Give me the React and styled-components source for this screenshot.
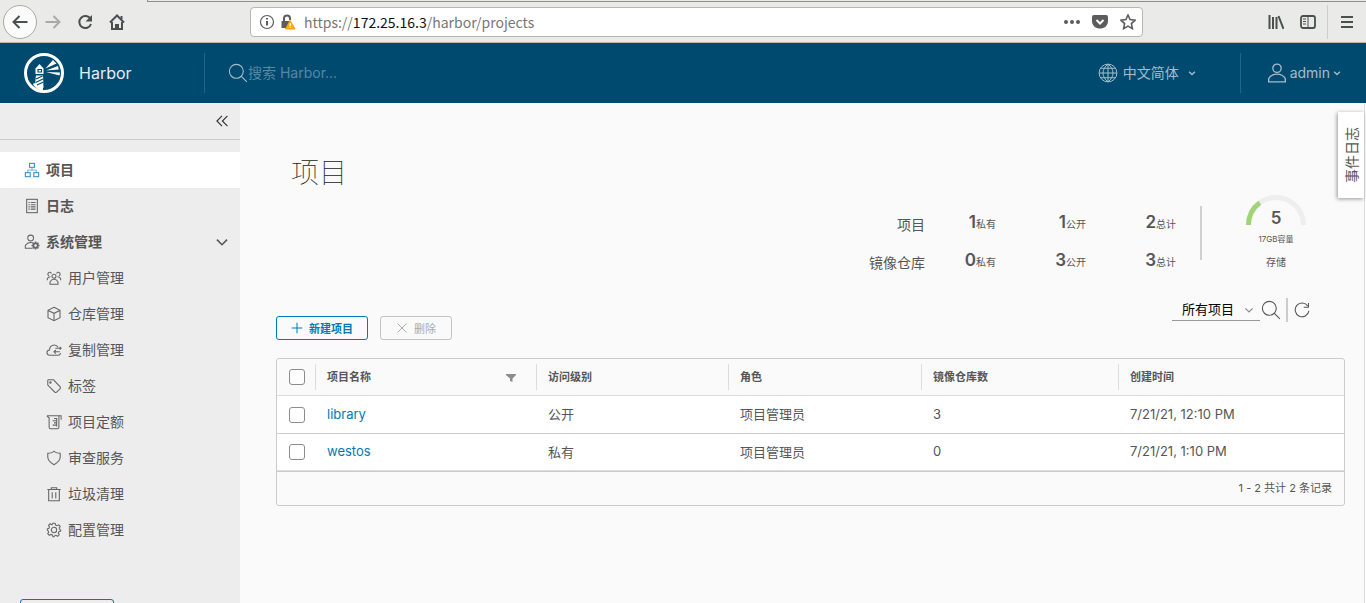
import React from "react";
import styled, { createGlobalStyle } from "styled-components";

const GlobalStyle = createGlobalStyle`
  * {
    box-sizing: border-box;
  }

  body {
    margin: 0;
    overflow: hidden;
    font-family: Inter, "Noto Sans CJK SC", sans-serif;
    font-size: 14px;
    color: #565656;
  }

  button, input, select {
    font-family: inherit;
    color: inherit;
    margin: 0;
  }
`;

/* 36 unit icons */
const icons = {
  projects: (
    <>
      <rect x="12.5" y="3" width="11" height="9" />
      <rect x="3" y="24" width="11" height="9" />
      <rect x="22" y="24" width="11" height="9" />
      <path d="M18 12v6M8.500 24v-6h19v6" strokeWidth="1.600" />
    </>
  ),
  logs: (
    <>
      <rect x="6" y="3" width="24" height="30" />
      <path d="M10 10h3M15 10h11M10 15h3M15 15h11M10 20h3M15 20h11M10 25h3M15 25h11" />
    </>
  ),
  admin: (
    <>
      <circle cx="15" cy="9" r="6.500" />
      <path d="M19 32H3v-6c3-5 7-7 12-7 2 0 4 .4 5 1" />
      <circle cx="26" cy="26" r="5" strokeWidth="4" />
      <path
        d="M26 17v3M26 32v3M17 26h3M32 26h3M19.600 19.600l2 2M30.400 30.400l2 2M32.400 19.600l-2 2M21.600 30.400l-2 2"
        strokeWidth="3.500"
      />
    </>
  ),
  users: (
    <>
      <circle cx="18" cy="14" r="4.500" />
      <path d="M9 32v-5c2-4 5-6 9-6s7 2 9 6v5z" />
      <path d="M12 8a4 4 0 1 0-5 5M24 8a4 4 0 1 1 5 5M3 23v-4c2-3 4-4 7-4M33 23v-4c-2-3-4-4-7-4" />
    </>
  ),
  cube: (
    <path d="M18 3 31.500 9.500v17L18 33 4.500 26.500v-17zM5 10l13 6.500L31 10M18 16v17" />
  ),
  cloud: (
    <>
      <path d="M33 25c-1 4-3 5-6 5H9c-9-1-9-11-1-12 0-13 15-14 19-6" />
      <path d="M21 14h13M31 11l3 3-3 3M31 22H19M22 18l-4 4 4 4" />
    </>
  ),
  tag: (
    <>
      <path d="M4 5v11l16 16c2 1 3 1 4 0l8-8c1-1 1-2 0-4L17 4H5z" />
      <circle cx="10" cy="10" r="1.500" />
    </>
  ),
  quota: (
    <path d="M2 4h32v9M2 4l5 5v20c0 2 1 4 3 4h16c2 0 3-2 3-4V4M18 10h6M15 15h9M18 20h6M15 25h9M24 9v19" />
  ),
  shield: (
    <path d="M18 3C14 6.500 9 7.500 4 7.500V16c0 8 6 13 14 17 8-4 14-9 14-17V7.500c-5 0-10-1-14-4.500z" />
  ),
  trash: <path d="M3 8h30M12 8V4h12v4M6 8v25h24V8M14 14v14M22 14v14" />,
  gear: (
    <>
      <circle cx="18" cy="18" r="6" />
      <path d="M15.500 3h5l1.200 4.200 3 1.300 3.800-2.200 3.500 3.500-2.200 3.900 1.200 3L33 18v2.500l-4 1.200-1.300 3 2.100 3.900-3.500 3.500-3.900-2.200-3 1.200L18.200 33h-2.700l-1.200-3.900-3-1.200-3.900 2.100-3.500-3.500L6 22.700l-1.200-3L3 18.500v-3l3.500-1.200 1.200-3-2-3.800 3.500-3.500 3.900 2.200z" />
    </>
  ),
  search: (
    <>
      <circle cx="15" cy="15" r="12.500" />
      <path d="m24 24 10 10" />
    </>
  ),
  globe: (
    <>
      <circle cx="18" cy="18" r="16" />
      <path d="M18 2v32M2 18h32M5 9.500h26M5 26.500h26M18 2c-12 9-12 23 0 32M18 2c12 9 12 23 0 32" />
    </>
  ),
  user: (
    <>
      <circle cx="18" cy="9.500" r="7.500" />
      <path d="M3 34v-6c3-5 8-8 15-8s12 3 15 8v6z" />
    </>
  ),
  down: <path d="m5 12 13 13 13-13" />,
  collapse: <path d="M18 5 5 18l13 13M32 5 19 18l13 13" />,
  plus: <path d="M18 2v32M2 18h32" />,
  cross: <path d="m5 5 26 26M31 5 5 31" />,
  refresh: <path d="M31 9A15.500 15.500 0 1 0 33.500 20M32.500 2v10H22" />,
};

const Icon = ({ name, size = 16, weight = 2.4 }) => (
  <Svg $size={size} viewBox="0 0 36 36" strokeWidth={weight} aria-hidden="true">
    {icons[name]}
  </Svg>
);

const subItems = [
  ["users", "用户管理"],
  ["cube", "仓库管理"],
  ["cloud", "复制管理"],
  ["tag", "标签"],
  ["quota", "项目定额"],
  ["shield", "审查服务"],
  ["trash", "垃圾清理"],
  ["gear", "配置管理"],
];

const stats = [
  { label: "项目", values: [[1, "私有"], [1, "公开"], [2, "总计"]] },
  { label: "镜像仓库", values: [[0, "私有"], [3, "公开"], [3, "总计"]] },
];

const projects = [
  { name: "library", access: "公开", role: "项目管理员", repos: 3, created: "7/21/21, 12:10 PM" },
  { name: "westos", access: "私有", role: "项目管理员", repos: 0, created: "7/21/21, 1:10 PM" },
];

const BrowserBar = () => (
  <Browser>
    <TabEdge />
    <Tools>
      <BackButton aria-label="Back">
        <Glyph viewBox="0 0 16 16">
          <path d="M15.500 8H1.500M7.500 2 1.500 8l6 6" />
        </Glyph>
      </BackButton>
      <ToolButton aria-label="Forward" $faded>
        <Glyph viewBox="0 0 16 16">
          <path d="M.500 8h14M8.500 2l6 6-6 6" />
        </Glyph>
      </ToolButton>
      <ToolButton aria-label="Reload">
        <Glyph viewBox="0 0 16 16">
          <path d="M13.500 5A6 6 0 1 0 14 10" />
          <path d="M15 1v6.500H8.500z" fill="currentColor" stroke="none" />
        </Glyph>
      </ToolButton>
      <ToolButton aria-label="Home">
        <Glyph viewBox="0 0 16 16">
          <path d="M1 8.500 8 1.500l7 7M3 8v7h10V8" />
          <path d="M6 15v-5h4v5z" fill="currentColor" stroke="none" />
          <path d="M12.500 2v3" />
        </Glyph>
      </ToolButton>
      <UrlBar>
        <Glyph viewBox="0 0 16 16">
          <circle cx="8" cy="8" r="6.500" strokeWidth="1.200" />
          <path d="M8 7v4.500M8 4v1.500" />
        </Glyph>
        <Glyph viewBox="0 0 16 16">
          <path d="M4 7V4.500a3 3 0 0 1 6 0V6" />
          <path d="M1.500 7H10v7H1.500z" fill="currentColor" stroke="none" />
          <path d="m10 6.500 5 8.500H5.500z" fill="#ffb000" stroke="#f0a000" strokeWidth="1" />
          <path d="M10.200 9v3M10.200 13v1" stroke="#fff" strokeWidth="1.200" />
        </Glyph>
        <Address>
          https://<b>172.25.16.3</b>/harbor/projects
        </Address>
        <UrlActions>
          <Glyph viewBox="0 0 16 16">
            <g fill="currentColor" stroke="none">
              <circle cx="2" cy="8" r="2" />
              <circle cx="8" cy="8" r="2" />
              <circle cx="14" cy="8" r="2" />
            </g>
          </Glyph>
          <Glyph viewBox="0 0 16 16">
            <path
              d="M2 1h12a2 2 0 0 1 2 2v4c0 10-16 10-16 0V3a2 2 0 0 1 2-2z"
              fill="currentColor"
              stroke="none"
            />
            <path d="m4.500 6 3.500 3.500L11.500 6" stroke="#fff" />
          </Glyph>
          <Glyph viewBox="0 0 16 16">
            <path
              d="m8 1 2.100 4.600 5 .6-3.700 3.400 1 5L8 12.100l-4.400 2.500 1-5L.900 6.200l5-.6z"
              strokeWidth="1.600"
            />
          </Glyph>
        </UrlActions>
      </UrlBar>
      <ToolButton aria-label="Library">
        <Glyph viewBox="0 0 16 16">
          <path d="M1.500 1v14M5 3v12M8.500 3v12M10.500 2l5 13" strokeWidth="2" />
        </Glyph>
      </ToolButton>
      <ToolButton aria-label="Sidebars">
        <Glyph viewBox="0 0 16 16">
          <rect x="1" y="2" width="14" height="12" rx="2" strokeWidth="1.800" />
          <path d="M8 2v12M3 5h3M3 7.500h3M3 10h3" strokeWidth="1" />
        </Glyph>
      </ToolButton>
      <MenuArea>
        <ToolButton aria-label="Menu">
          <Glyph viewBox="0 0 16 16">
            <path d="M2 3h12M2 8h12M2 13h12" />
          </Glyph>
        </ToolButton>
      </MenuArea>
    </Tools>
  </Browser>
);

const HarborLogo = () => (
  <Logo viewBox="0 0 40 40" aria-hidden="true">
    <circle cx="20" cy="20" r="18.500" fill="none" stroke="#fff" strokeWidth="3" />
    <g fill="#fff">
      <path d="M11.500 15.500 15.500 11l4 4.500v5.500h-8z" />
      <path d="M12 22.500h7l.5 12.500-8.500-4z" />
      <path d="M10 30l9 3.500v4c-4 0-8-3-10-6z" />
      <path d="M21.500 15.500 29 7l3.500 3.500zM22 17.500l12-4.500.8 3.500zM22 19l14 .5-.5 3z" />
    </g>
    <path
      d="M14 16.500h3.500V19H14zM12 26l6.500-3M11.500 29.500l7.500-3.500M13 32l6.500-3"
      fill="none"
      stroke="#004a70"
      strokeWidth="1.200"
    />
  </Logo>
);

const Header = () => (
  <Navbar>
    <Brand href="#">
      <HarborLogo />
      Harbor
    </Brand>
    <SearchBox>
      <Icon name="search" size={20} weight={2} />
      <input type="text" placeholder="搜索 Harbor..." aria-label="搜索" />
    </SearchBox>
    <HeaderButton $space={5} $right={44}>
      <Icon name="globe" size={20} weight={1.8} />
      <HeaderText>中文简体</HeaderText>
      <Caret>
        <Icon name="down" size={8} weight={6} />
      </Caret>
    </HeaderButton>
    <UserArea>
      <HeaderButton $space={3} $right={25}>
        <Icon name="user" size={20} />
        <HeaderText>admin</HeaderText>
        <Icon name="down" size={8} weight={6} />
      </HeaderButton>
    </UserArea>
  </Navbar>
);

const SideNav = () => (
  <Sidebar>
    <CollapseButton aria-label="Collapse">
      <Icon name="collapse" size={14} weight={3} />
    </CollapseButton>
    <NavList>
      <NavLink href="#" $active>
        <Icon name="projects" />
        <span>项目</span>
      </NavLink>
      <NavLink href="#">
        <Icon name="logs" />
        <span>日志</span>
      </NavLink>
      <NavLink href="#">
        <Icon name="admin" />
        <span>系统管理</span>
        <Icon name="down" size={14} weight={4} />
      </NavLink>
      {subItems.map(([icon, label]) => (
        <NavLink href="#" key={label} $sub>
          <Icon name={icon} />
          <span>{label}</span>
        </NavLink>
      ))}
    </NavList>
    <SidebarButton aria-label="API" />
  </Sidebar>
);

const Summary = () => (
  <SummaryRow>
    <StatRows>
      {stats.map((row) => (
        <StatRow key={row.label}>
          <StatLabel>{row.label}</StatLabel>
          {row.values.map(([count, unit]) => (
            <Stat key={unit}>
              <b>{count}</b>
              {unit}
            </Stat>
          ))}
        </StatRow>
      ))}
    </StatRows>
    <Storage>
      <Gauge>
        <svg width="60" height="30" viewBox="0 0 60 30" fill="none" strokeWidth="5">
          <path d="M2.500 30a27.500 27.500 0 0 1 55 0" stroke="#eee" />
          <path d="M2.500 30A27.500 27.500 0 0 1 13.800 7.800" stroke="#a0d475" />
        </svg>
        <GaugeValue>5</GaugeValue>
      </Gauge>
      <Capacity>17GB容量</Capacity>
      <StorageLabel>存储</StorageLabel>
    </Storage>
  </SummaryRow>
);

const ProjectTable = () => (
  <Datagrid>
    <Table>
      <colgroup>
        <col width="38" />
        <col width="221" />
        <col width="192" />
        <col width="193" />
        <col width="197" />
        <col />
      </colgroup>
      <thead>
        <tr>
          <th>
            <Checkbox type="checkbox" aria-label="全选" />
          </th>
          <th>
            <HeadCell>
              项目名称
              <FilterButton aria-label="Filter">
                <svg width="10" height="10" viewBox="0 0 10 10" fill="currentColor">
                  <path d="M0 1h10v1L6.500 5.500V9L4 8V5.500L0 2z" />
                </svg>
              </FilterButton>
            </HeadCell>
          </th>
          <th><HeadCell>访问级别</HeadCell></th>
          <th><HeadCell>角色</HeadCell></th>
          <th><HeadCell>镜像仓库数</HeadCell></th>
          <th><HeadCell>创建时间</HeadCell></th>
        </tr>
      </thead>
      <tbody>
        {projects.map((project) => (
          <tr key={project.name}>
            <CheckCell>
              <Checkbox type="checkbox" aria-label={project.name} />
            </CheckCell>
            <td><a href="#">{project.name}</a></td>
            <td>{project.access}</td>
            <td>{project.role}</td>
            <td>{project.repos}</td>
            <td>{project.created}</td>
          </tr>
        ))}
      </tbody>
    </Table>
    <GridFooter>1 - 2 共计 2 条记录</GridFooter>
  </Datagrid>
);

const App = () => {
  return (
    <Page>
      <GlobalStyle />
      <BrowserBar />
      <Header />
      <Body>
        <SideNav />
        <Main>
          <Title>项目</Title>
          <Summary />
          <ActionBar>
            <ActionButton>
              <Icon name="plus" size={12} weight={3} />
              新建项目
            </ActionButton>
            <ActionButton disabled>
              <Icon name="cross" size={12} weight={3} />
              删除
            </ActionButton>
            <Filters>
              <SelectBox>
                <select aria-label="项目类型" defaultValue="all">
                  <option value="all">所有项目</option>
                </select>
                <Icon name="down" size={10} weight={4} />
              </SelectBox>
              <PlainButton aria-label="Search">
                <Icon name="search" size={20} weight={2} />
              </PlainButton>
              <FilterDivider />
              <PlainButton aria-label="Refresh">
                <Icon name="refresh" />
              </PlainButton>
            </Filters>
          </ActionBar>
          <ProjectTable />
        </Main>
        <EventTab>事件日志</EventTab>
      </Body>
    </Page>
  );
};

const Page = styled.div`
  display: flex;
  flex-direction: column;
  height: 100vh;
  overflow: hidden;
`;

const Svg = styled.svg`
  width: ${(props) => props.$size}px;
  height: ${(props) => props.$size}px;
  flex: none;
  fill: none;
  stroke: currentColor;
`;

const Glyph = styled.svg`
  display: block;
  flex: none;
  width: 16px;
  height: 16px;
  fill: none;
  stroke: currentColor;
  stroke-width: 2;
`;

const Browser = styled.div`
  flex: none;
  background: #eaeae8;
  border-bottom: 1px solid #b6b6b2;
  color: #4a4f50;
`;

const TabEdge = styled.div`
  height: 2px;
  margin-left: 147px;
  border-left: 1px solid #8e908b;
  border-bottom: 1px solid #8e908b;
`;

const Tools = styled.div`
  display: flex;
  align-items: center;
  height: 40px;
  padding-left: 3px;
`;

const ToolButton = styled.button`
  display: flex;
  justify-content: center;
  align-items: center;
  flex: none;
  width: 32px;
  height: 32px;
  padding: 0;
  border: 0;
  background: none;
  opacity: ${(props) => (props.$faded ? 0.4 : 1)};
`;

const BackButton = styled(ToolButton)`
  width: 34px;
  height: 34px;
  border: 1px solid #a9aaa7;
  border-radius: 50%;
  background: #fbfbfb;
`;

const UrlBar = styled.div`
  display: flex;
  align-items: center;
  flex: 1;
  gap: 5px;
  height: 30px;
  margin: 0 117px;
  padding: 0 6px 0 8px;
  border: 1px solid #b6b6b2;
  border-radius: 4px;
  background: #fff;
  color: #5c5c5c;
`;

const Address = styled.span`
  flex: 1;
  margin-left: 3px;
  font-family: "Noto Sans CJK SC", sans-serif;
  font-size: 14px;
  line-height: 20px;
  color: #777;

  b {
    font-weight: 400;
    color: #111;
  }
`;

const UrlActions = styled.div`
  display: flex;
  gap: 12px;
`;

const MenuArea = styled.div`
  display: flex;
  align-items: center;
  height: 34px;
  margin-left: 3px;
  padding: 0 3px;
  border-left: 1px solid #ccccca;
`;

const Navbar = styled.header`
  display: flex;
  align-items: center;
  flex: none;
  height: 60px;
  background: #004a70;
  color: #a5bccb;
`;

const Brand = styled.a`
  display: flex;
  align-items: center;
  gap: 15px;
  width: 204px;
  padding-left: 24px;
  font-size: 16px;
  color: #e6edf1;
  text-decoration: none;
`;

const Logo = styled.svg`
  width: 40px;
  height: 40px;
`;

const SearchBox = styled.label`
  display: flex;
  align-items: center;
  flex: 1;
  height: 40px;
  padding-left: 23px;
  border-left: 1px solid #25658a;

  input {
    width: 200px;
    padding: 0 0 2px;
    border: 0;
    outline: 0;
    background: none;
    font-size: 14px;
  }

  input::placeholder {
    color: #5687a3;
  }
`;

const HeaderButton = styled.button`
  display: flex;
  align-items: center;
  gap: ${(props) => props.$space}px;
  padding: 0 ${(props) => props.$right}px 0 0;
  border: 0;
  background: none;
  font-size: 14px;
`;

const HeaderText = styled.span`
  padding-bottom: 2px;
`;

const Caret = styled.span`
  display: flex;
  margin-left: 4px;
`;

const UserArea = styled.div`
  display: flex;
  align-items: center;
  height: 40px;
  padding-left: 26px;
  border-left: 1px solid #25658a;
`;

const Body = styled.div`
  position: relative;
  display: flex;
  flex: 1;
  min-height: 0;
`;

const Sidebar = styled.aside`
  flex: none;
  width: 240px;
  overflow: hidden;
  background: #ededed;
`;

const CollapseButton = styled.button`
  display: flex;
  justify-content: flex-end;
  align-items: center;
  width: 100%;
  height: 37px;
  padding: 0 11px;
  border: 0;
  border-bottom: 1px solid #ccc;
  background: none;
  color: #333;
`;

const NavList = styled.nav`
  margin: 12px 0 51px;
`;

const NavLink = styled.a`
  display: flex;
  align-items: center;
  gap: 6px;
  height: 36px;
  padding: 0 11px 0 ${(props) => (props.$sub ? 46 : 24)}px;
  background: ${(props) => (props.$active ? "#fff" : "none")};
  font-weight: ${(props) => (props.$sub ? 400 : 700)};
  color: #565656;
  text-decoration: none;

  span {
    flex: 1;
    padding-bottom: 2px;
  }

  svg:first-child {
    color: ${(props) => (props.$active ? "#3391cf" : "#666")};
  }
`;

const SidebarButton = styled.button`
  display: block;
  width: 94px;
  height: 36px;
  margin-left: 20px;
  border: 1px solid #0079b8;
  border-radius: 3px;
  background: none;
`;

const Main = styled.main`
  flex: 1;
  min-width: 0;
  margin-right: 1px;
  padding: 50px 19px 0 36px;
  border-right: 1px solid #ddd;
  background: #fafafa;
`;

const Title = styled.h2`
  margin: 0 0 6px 15px;
  font-family: "Noto Sans CJK SC Thin", "Noto Sans CJK SC Light", "Noto Sans CJK SC", sans-serif;
  font-size: 28px;
  font-weight: 200;
  line-height: 36px;
  color: #222;
`;

const SummaryRow = styled.div`
  display: flex;
  justify-content: flex-end;
  height: 77px;
  padding-right: 39px;
`;

const StatRows = styled.div`
  height: 54px;
  margin-top: 11px;
  padding-right: 24px;
  border-right: 2px solid #d0d0d0;
`;

const StatRow = styled.div`
  display: grid;
  grid-template-columns: 120px 71px 90px 90px;
  align-items: center;
  height: 38px;
  text-align: right;
`;

const StatLabel = styled.span`
  padding-bottom: 3px;
  font-size: 14px;
`;

const Stat = styled.span`
  font-size: 10px;
  line-height: 24px;
  padding-bottom: 4px;

  b {
    font-size: 17px;
    font-weight: 600;
  }
`;

const Storage = styled.div`
  display: flex;
  flex-direction: column;
  align-items: center;
  margin-left: 44px;
`;

const Gauge = styled.div`
  position: relative;
  width: 60px;
  height: 30px;
`;

const GaugeValue = styled.b`
  position: absolute;
  inset: 12px 0 auto;
  font-size: 17px;
  font-weight: 600;
  line-height: 22px;
  text-align: center;
`;

const Capacity = styled.span`
  margin-top: 8px;
  font-size: 8px;
  line-height: 12px;
`;

const StorageLabel = styled.span`
  margin-top: 9px;
  font-size: 10px;
  line-height: 16px;
`;

const ActionBar = styled.div`
  display: flex;
  align-items: flex-end;
  gap: 12px;
  height: 42px;
  margin: 26px 0 18px;
  padding-right: 34px;
`;

const ActionButton = styled.button`
  display: flex;
  justify-content: center;
  align-items: center;
  gap: 6px;
  height: 24px;
  padding: 0 14px;
  border: 1px solid #0079b8;
  border-radius: 3px;
  background: none;
  font-size: 11px;
  font-weight: 600;
  color: #0079b8;

  &:disabled {
    padding: 0 15px;
    border-color: #c4c4c4;
    font-weight: 400;
    color: #aaa;
  }
`;

const Filters = styled.div`
  display: flex;
  align-items: center;
  align-self: flex-start;
  height: 24px;
  margin-left: auto;
`;

const SelectBox = styled.span`
  display: grid;
  grid-template-columns: 1fr 16px;
  align-items: center;
  width: 88px;
  height: 22px;
  border-bottom: 1px solid #999;

  select {
    grid-area: 1 / 1 / 2 / 3;
    width: 100%;
    padding: 0 10px 2px;
    border: 0;
    appearance: none;
    background: none;
    font-size: 13px;
    color: #000;
  }

  svg {
    grid-area: 1 / 2;
    color: #888;
    pointer-events: none;
  }
`;

const PlainButton = styled.button`
  display: flex;
  padding: 0 1px;
  border: 0;
  background: none;
`;

const FilterDivider = styled.span`
  width: 2px;
  height: 24px;
  margin: 0 5px 0 4px;
  background: #ccc;
`;

const Datagrid = styled.div`
  border: 1px solid #ccc;
  border-radius: 3px;
  overflow: hidden;
`;

const Table = styled.table`
  width: 100%;
  table-layout: fixed;
  border-collapse: separate;
  border-spacing: 0;
  text-align: left;

  th {
    height: 37px;
    padding: 0;
    border-bottom: 1px solid #ddd;
    font-size: 11px;
    font-weight: 700;
  }

  td {
    height: 38px;
    padding: 0 12px 2px;
    border-bottom: 1px solid #ccc;
    background: #fff;
    font-size: 13px;
  }

  tr:last-child td {
    height: 37px;
    border-color: #ddd;
  }

  a {
    color: #0079b8;
    text-decoration: none;
  }
`;

const HeadCell = styled.div`
  display: flex;
  align-items: center;
  justify-content: space-between;
  height: 26px;
  padding: 0 20px 2px 11px;
  border-left: 1px solid #ddd;
`;

const CheckCell = styled.td`
  && {
    padding: 0;
  }
`;

const Checkbox = styled.input`
  display: block;
  appearance: none;
  width: 16px;
  height: 16px;
  border: 1px solid #8c8c8c;
  border-radius: 3px;
  background: #fff;

  && {
    margin: 0 auto 0 12px;
  }
`;

const FilterButton = styled.button`
  display: flex;
  padding: 4px 0 0;
  border: 0;
  background: none;

  svg {
    color: #8c8c8c;
  }
`;

const GridFooter = styled.div`
  height: 34px;
  padding-right: 12px;
  border-top: 1px solid #ccc;
  font-size: 11px;
  line-height: 32px;
  text-align: right;
`;

const EventTab = styled.button`
  position: absolute;
  top: 9px;
  right: 2px;
  width: 26px;
  height: 86px;
  padding: 0;
  border: 0;
  background: #fff;
  box-shadow: 1px -1px 4px rgba(0, 0, 0, 0.4);
  font-size: 14px;
  writing-mode: vertical-rl;
  text-orientation: sideways;
  transform: rotate(180deg);
`;

export default App;
